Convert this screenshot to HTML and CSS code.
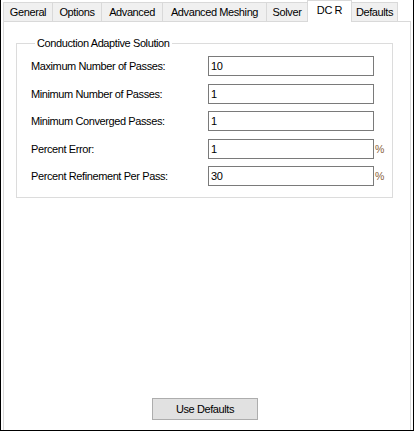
FILE: index.html
```html
<!DOCTYPE html>
<html lang="en">
<head>
<meta charset="utf-8">
<title>Solution Setup</title>
<link rel="stylesheet" href="styles.css">
</head>
<body>
<div class="window">
  <div class="tabs">
    <div class="tab w-general">General</div>
    <div class="tab w-options">Options</div>
    <div class="tab w-advanced">Advanced</div>
    <div class="tab w-meshing">Advanced Meshing</div>
    <div class="tab w-solver">Solver</div>
    <div class="tab tab-active w-dcr">DC R</div>
    <div class="tab w-defaults">Defaults</div>
  </div>
  <div class="panel">
    <fieldset class="group">
      <legend class="group-title">Conduction Adaptive Solution</legend>
      <div class="form">
        <label class="field-label">Maximum Number of Passes:</label>
        <input class="field-input" type="text" value="10">
        <span class="unit"></span>

        <label class="field-label">Minimum Number of Passes:</label>
        <input class="field-input" type="text" value="1">
        <span class="unit"></span>

        <label class="field-label">Minimum Converged Passes:</label>
        <input class="field-input" type="text" value="1">
        <span class="unit"></span>

        <label class="field-label">Percent Error:</label>
        <input class="field-input" type="text" value="1">
        <span class="unit">%</span>

        <label class="field-label">Percent Refinement Per Pass:</label>
        <input class="field-input" type="text" value="30">
        <span class="unit">%</span>
      </div>
    </fieldset>
    <div class="spacer"></div>
    <button class="btn" type="button">Use Defaults</button>
  </div>
</div>
</body>
</html>
```

FILE: styles.css
```css
* {
  box-sizing: border-box;
}

html, body {
  margin: 0;
  padding: 0;
  background: #fff;
}

body {
  font-family: "Liberation Sans", Arial, sans-serif;
  font-size: 11px;
  letter-spacing: -0.4px;
  color: #000;
}

.window {
  width: 414px;
  height: 431px;
  border: 1px solid #000;
  border-top: none;
  background: #fff;
  display: flex;
  flex-direction: column;
  padding: 0 1px;
  overflow: hidden;
}

/* tab strip */
.tabs {
  display: flex;
  align-items: flex-end;
  height: 21px;
  padding-left: 1px;
}

.tab {
  height: 19px;
  margin-left: -1px;
  border: 1px solid #d9d9d9;
  border-bottom: none;
  background: #f0f0f0;
  text-align: center;
  line-height: 18px;
  white-space: nowrap;
}

.tab:first-child {
  margin-left: 0;
}

.tab-active {
  height: 22px;
  margin-bottom: -1px;
  background: #fff;
  line-height: 19px;
  position: relative;
  z-index: 1;
}

.w-general { width: 50px; }
.w-options { width: 50px; }
.w-advanced { width: 62px; }
.w-meshing { width: 105px; }
.w-solver { width: 42px; }
.w-dcr { width: 45px; }
.w-defaults { width: 47px; }

/* page body */
.panel {
  flex: 1;
  display: flex;
  flex-direction: column;
  border: 1px solid #d9d9d9;
  border-bottom: none;
  margin: 0 1px;
  background: #fff;
}

.group {
  margin: 14px 0 0 12px;
  width: 377px;
  height: 162px;
  padding: 6px 0 0 14px;
  border: 1px solid #dcdcdc;
  min-width: 0;
}

.group-title {
  margin-left: 4px;
  padding: 0 2px;
  line-height: 14px;
}

.form {
  display: grid;
  grid-template-columns: 177px 166px 12px;
  grid-auto-rows: 20px;
  row-gap: 7.5px;
  align-items: center;
}

.field-label {
  white-space: nowrap;
}

.field-input {
  width: 166px;
  height: 20px;
  margin: 0;
  padding: 0 2px;
  border: 1px solid #7a7a7a;
  border-radius: 0;
  font: inherit;
  letter-spacing: inherit;
  color: #000;
  background: #fff;
  outline: none;
}

.unit {
  padding-left: 1px;
  color: #8a5f3a;
  font-size: 10.5px;
}

.spacer {
  flex: 1;
}

.btn {
  align-self: flex-start;
  margin: 0 0 10px 148px;
  width: 106px;
  height: 22px;
  padding: 0;
  border: 1px solid #adadad;
  border-radius: 0;
  background: #e1e1e1;
  font: inherit;
  letter-spacing: inherit;
  color: #000;
}
```
